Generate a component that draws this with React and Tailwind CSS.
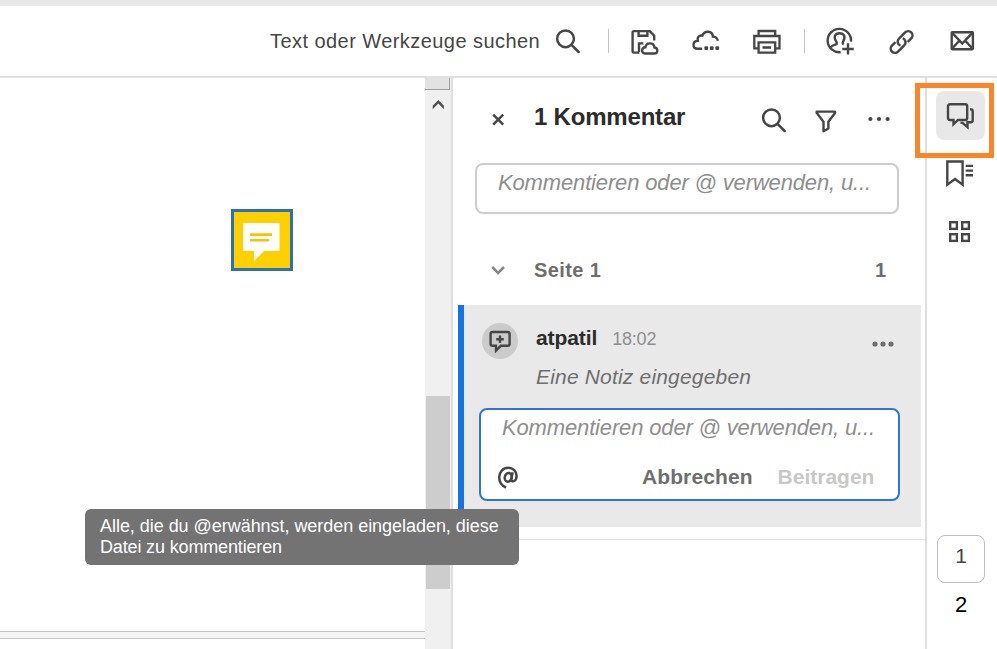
import { useState } from "react";

function Icon({ children, className = "", size = 32, width = 2.3 }) {
  return (
    <svg
      width={size}
      height={size}
      viewBox={`0 0 ${size} ${size}`}
      fill="none"
      stroke="currentColor"
      strokeWidth={width}
      className={`shrink-0 ${className}`}
    >
      {children}
    </svg>
  );
}

const SearchIcon = ({ className }) => (
  <Icon className={className} width={2.5}>
    <circle cx="13.5" cy="13.8" r="8.4" />
    <path d="M19.5 19.8l7.2 7.2" strokeLinecap="round" />
  </Icon>
);

const SaveCloudIcon = ({ className }) => (
  <Icon className={className} width={2.4}>
    <path d="M26.2 15.5v-4.7L21.8 6.1H5.9q-1.3 0-1.3 1.3v18.9q0 1.3 1.3 1.3H11.4" />
    <path d="M10.6 6v4.7h8.8V6M11 27v-8.6h4.4" />
    <path d="M17 28.5h9.2c4.2 0 4-5.5.3-6-.6-5.4-8.3-5.4-9.1-.2-4.3.2-4.3 6.2-.4 6.2z" />
  </Icon>
);

const CloudDotsIcon = ({ className }) => (
  <Icon className={className} width={2.4}>
    <path d="M12.2 23.8H7.6C1.9 23.5 2.3 15.9 7.8 15.7c-1-3.300 1.500-5.900 4.500-5 2.200-5.800 10.300-5 10.600.9 2.600 0 4.400 1.700 5 4.200" />
    <g fill="currentColor" stroke="none">
      <rect x="14.4" y="21.3" width="3.7" height="3.7" rx="1" />
      <rect x="19.9" y="21.3" width="3.7" height="3.7" rx="1" />
      <rect x="25.4" y="21.3" width="3.7" height="3.7" rx="1" />
    </g>
  </Icon>
);

const PrintIcon = ({ className }) => (
  <Icon className={className} width={2.3}>
    <path d="M7.6 23.4H3.3V11h25.2v12.400h-4.300" />
    <path d="M7.6 11V6h16.600V11M7.600 17.400h16.600v10.300H7.600zM11.500 22.500h8.600" />
  </Icon>
);

const AddPersonIcon = ({ className }) => (
  <Icon className={className} width={2.4}>
    <path d="M15.6 27.200A11.700 11.700 0 1 1 26 16.600" />
    <path d="M5.6 22.400c1.300-1.900 3.500-2.400 5.300-3 1.300-.6 1-1.700.2-3-3-4.600-.9-8.200 3.500-8.200s6.300 3.600 3.600 8.200c-.8 1.500-.9 2.200.5 3" />
    <path d="M23 18.200v11.300M17.300 24h11.500" />
  </Icon>
);

const LinkIcon = ({ className }) => (
  <Icon className={className} width={2.5}>
    <g transform="rotate(-45 15.6 17)">
      <path d="M12.2 18.8A4.3 4.3 0 0 1 16.2 12.700H24.900a4.300 4.300 0 0 1 0 8.600H20" />
      <path d="M19 15.2A4.3 4.3 0 0 1 15 21.300H6.300a4.300 4.300 0 0 1 0-8.600H11.200" />
    </g>
  </Icon>
);

const MailIcon = ({ className }) => (
  <Icon className={className} width={2.4}>
    <rect x="4.7" y="7.2" width="21.2" height="17" rx=".6" />
    <path d="M5 7.600l10.300 11 10.300-11M5 23.800l6.800-7.600M25.600 23.800l-6.800-7.600" />
  </Icon>
);

const FilterIcon = ({ className }) => (
  <Icon className={className} width={2.4}>
    <path
      d="M6.700 7.600h18.200l.3 1.200-6.800 8.900v6.800l-4.900 2.700v-9.500l-6.900-8.900z"
      strokeLinejoin="round"
    />
  </Icon>
);

const MoreIcon = ({ className, r = 2.1, gap = 8.6 }) => (
  <Icon className={className}>
    <g fill="currentColor" stroke="none">
      <circle cx={16 - gap} cy="16" r={r} />
      <circle cx="16" cy="16" r={r} />
      <circle cx={16 + gap} cy="16" r={r} />
    </g>
  </Icon>
);

const ChatIcon = () => (
  <Icon width={2.4}>
    <path d="M5 4.300h15.200q2 0 2 2v11.700q0 2-2 2H13l-4.500 4.300v-4.300H5q-2 0-2-2V6.300q0-2 2-2z" />
    <path d="M25 9.300q2.700 0 2.700 2v8.900q0 2-2 2h-3.200v5l-5-4.300h-2" />
  </Icon>
);

const BookmarkIcon = () => (
  <Icon width={2.4}>
    <path d="M3.300 4.500h15.300v23.200L11 22l-7.700 5.700z" />
    <path d="M21.700 8.900H29M21.700 13.600H29M21.700 18.300H29" />
  </Icon>
);

const GridIcon = () => (
  <Icon width={2.4}>
    <rect x="6.200" y="6.200" width="6.700" height="6.700" />
    <rect x="18.200" y="6.200" width="6.700" height="6.700" />
    <rect x="6.200" y="18.200" width="6.700" height="6.700" />
    <rect x="18.200" y="18.200" width="6.700" height="6.700" />
  </Icon>
);

const AtIcon = () => (
  <Icon size={24} width={2.5}>
    <ellipse cx="12.200" cy="12.300" rx="3.400" ry="4.400" transform="rotate(14 12.200 12.300)" />
    <path d="M16.600 7.200l-1.300 7.200c-.4 3.400 5.300 2.200 5.300-3.500 0-4.600-3.500-8.100-8.300-8.100-5.300 0-9.100 4.200-9.100 9.400 0 5.300 3.300 8.800 6.800 10.300" />
  </Icon>
);

function Toolbar() {
  return (
    <header className="flex h-[72px] shrink-0 items-center border-b-2 border-[#e0e0e0] bg-white pl-[270px] text-[#464646]">
      <span className="w-[282px] whitespace-nowrap text-[20px] tracking-[0.44px]">
        Text oder Werkzeuge suchen
      </span>
      <SearchIcon />
      <div className="ml-6 h-6 w-px bg-[#c4c4c4]" />
      <SaveCloudIcon className="ml-[19px]" />
      <CloudDotsIcon className="ml-[30px]" />
      <PrintIcon className="ml-[29px]" />
      <div className="ml-[21px] h-6 w-px bg-[#c4c4c4]" />
      <AddPersonIcon className="ml-5" />
      <LinkIcon className="ml-[29px]" />
      <MailIcon className="ml-[29px]" />
    </header>
  );
}

function DocumentView() {
  return (
    <section className="flex w-[425px] shrink-0 flex-col justify-between">
      <div className="ml-[231px] mt-[131px] size-[62px] border-3 border-[#2a72b5] bg-[#ffd000]">
        <svg width="56" height="56" viewBox="0 0 56 56">
          <path d="M9 11h36.500v28H30l-10 10V39H9z" fill="#fff" />
          <path d="M16 22.600h22M16 28.300h19" stroke="#f5c400" strokeWidth="2.6" />
        </svg>
      </div>
      <div className="mb-[10px] h-2 border-y border-[#c8c8c8] bg-[#f5f5f5]" />
    </section>
  );
}

function Scrollbar() {
  return (
    <div className="flex w-[26px] shrink-0 flex-col bg-[#f0f0f0] pr-px">
      <div className="h-3 border-b border-r border-[#a0a0a0] bg-[#e2e2e2]" />
      <svg width="25" height="20" viewBox="0 0 25 20" className="mt-[6px]">
        <path d="M7.700 9.800l5.600-5.700 5.600 5.700v3.400l-5.600-5.600-5.600 5.600z" fill="#505050" />
      </svg>
      <div className="ml-px mt-[280px] h-[193px] bg-[#cdcdcd]" />
    </div>
  );
}

function Comment({ placeholder }) {
  return (
    <article className="ml-[5px] mr-1 h-[222px] border-l-6 border-[#1473e6] bg-[#e9e9e9]">
      <div className="flex h-[103px] pl-[18px] pt-[18px]">
        <div className="size-9 shrink-0 rounded-full bg-[#cbcbcb] text-[#464646]">
          <Icon size={36} width={2.4}>
            <path d="M10.600 9h15q2 0 2 2v9.800q0 2-2 2h-6.800L14 27.600v-4.800h-3.400q-2 0-2-2V11q0-2 2-2z" />
            <path d="M18 12.400v7.600M14.200 16.200h7.600" />
          </Icon>
        </div>
        <div className="ml-[18px] flex-1">
          <div className="flex items-baseline leading-[30px]">
            <span className="text-[21px] font-bold tracking-[-0.1px] text-[#2c2c2c]">atpatil</span>
            <span className="ml-[15px] text-[18px] tracking-[-0.2px] text-[#8e8e8e]">18:02</span>
          </div>
          <p className="mt-2 text-[21px] italic leading-[30px] tracking-[0.18px] text-[#6e6e6e]">
            Eine Notiz eingegeben
          </p>
        </div>
        <MoreIcon className="mr-[22px] mt-[5px] text-[#6e6e6e]" r={2.6} gap={8} />
      </div>
      <div className="ml-[15px] h-[93px] w-[421px] rounded-lg border-2 border-[#2f76d0] bg-white pl-[21px] pt-1">
        <p className="text-[22px] italic leading-[28px] tracking-[-0.15px] text-[#8e8e8e]">
          {placeholder}
        </p>
        <div className="mt-[23px] flex items-center text-[21px] font-bold leading-6">
          <span className="-ml-[6px] text-[#464646]">
            <AtIcon />
          </span>
          <button className="ml-[122px] tracking-[0.1px] text-[#6e6e6e]">Abbrechen</button>
          <button className="ml-[25px] text-[#c8c8c8]">Beitragen</button>
        </div>
      </div>
    </article>
  );
}

function CommentPanel() {
  const placeholder = "Kommentieren oder @ verwenden, u...";

  return (
    <aside className="w-[476px] shrink-0 border-x-2 border-[#dedede]">
      <div className="flex h-[80px] items-center pl-[37px] text-[#464646]">
        <Icon size={16} width={2.5}>
          <path d="M3.200 4.700l10 10M13.200 4.700l-10 10" />
        </Icon>
        <h1 className="mb-[3px] ml-7 w-[224px] text-[24px] font-bold tracking-[-0.2px] text-[#2c2c2c]">
          1 Kommentar
        </h1>
        <SearchIcon className="mt-1" />
        <FilterIcon className="ml-5 mt-1" />
        <MoreIcon className="ml-[21px] mt-[2px]" />
      </div>

      <div className="ml-[22px] mt-[5px] h-[51px] w-[424px] rounded-lg border-2 border-[#cdcdcd] pl-[21px] pt-[4px] text-[22px] italic leading-[28px] tracking-[-0.15px] text-[#8e8e8e]">
        {placeholder}
      </div>

      <div className="mt-[21px] flex h-[70px] items-center pl-[37px] text-[20px] font-bold text-[#6e6e6e]">
        <Icon size={16} width={2.5} className="text-[#858585]">
          <path d="M2.200 5l5.900 5.900L14 5" />
        </Icon>
        <span className="ml-[28px] tracking-[0.4px]">Seite 1</span>
        <span className="ml-auto mr-[39px]">1</span>
      </div>

      <Comment placeholder={placeholder} />
      <div className="mt-3 h-px bg-[#e4e4e4]" />
    </aside>
  );
}

function Rail({ page, setPage }) {
  return (
    <nav className="flex flex-1 flex-col items-start pl-[9px] pt-[13px] text-[#464646]">
      <button className="relative size-[49px] rounded-lg bg-[#e8e8e8] pl-[9px]">
        <ChatIcon />
        <span className="absolute -left-[21px] -top-2 h-[75px] w-[79px] border-5 border-[#fd8427]" />
      </button>
      <button className="ml-2 mt-[17px]">
        <BookmarkIcon />
      </button>
      <button className="ml-2 mt-[27px]">
        <GridIcon />
      </button>
      <div
        className="ml-px mt-[287px] h-12 w-12 rounded-lg border border-[#bdbdbd] pt-[6px] text-center text-[21px] leading-[28px]"
        onClick={() => setPage(1)}
      >
        {page}
      </div>
      <span className="ml-px mt-2 w-12 text-center text-[22px] leading-[28px] text-black">2</span>
    </nav>
  );
}

export default function App() {
  const [page, setPage] = useState(1);

  return (
    <div className="relative flex h-[649px] w-[997px] flex-col overflow-hidden bg-white font-['Liberation_Sans',Arial,sans-serif]">
      <div className="h-[6px] shrink-0 bg-[#e8e8e8]" />
      <Toolbar />
      <main className="flex min-h-0 flex-1">
        <DocumentView />
        <Scrollbar />
        <CommentPanel />
        <Rail page={page} setPage={setPage} />
      </main>

      {/* mention hint */}
      <div className="absolute left-[85px] top-[509px] h-14 w-[434px] rounded-md bg-[#737373] pl-[15px] pt-[7px] text-[18px] leading-[21px] tracking-[-0.04px] text-white">
        Alle, die du @erwähnst, werden eingeladen, diese
        <br />
        <span className="tracking-[-0.15px]">Datei zu kommentieren</span>
      </div>
    </div>
  );
}
